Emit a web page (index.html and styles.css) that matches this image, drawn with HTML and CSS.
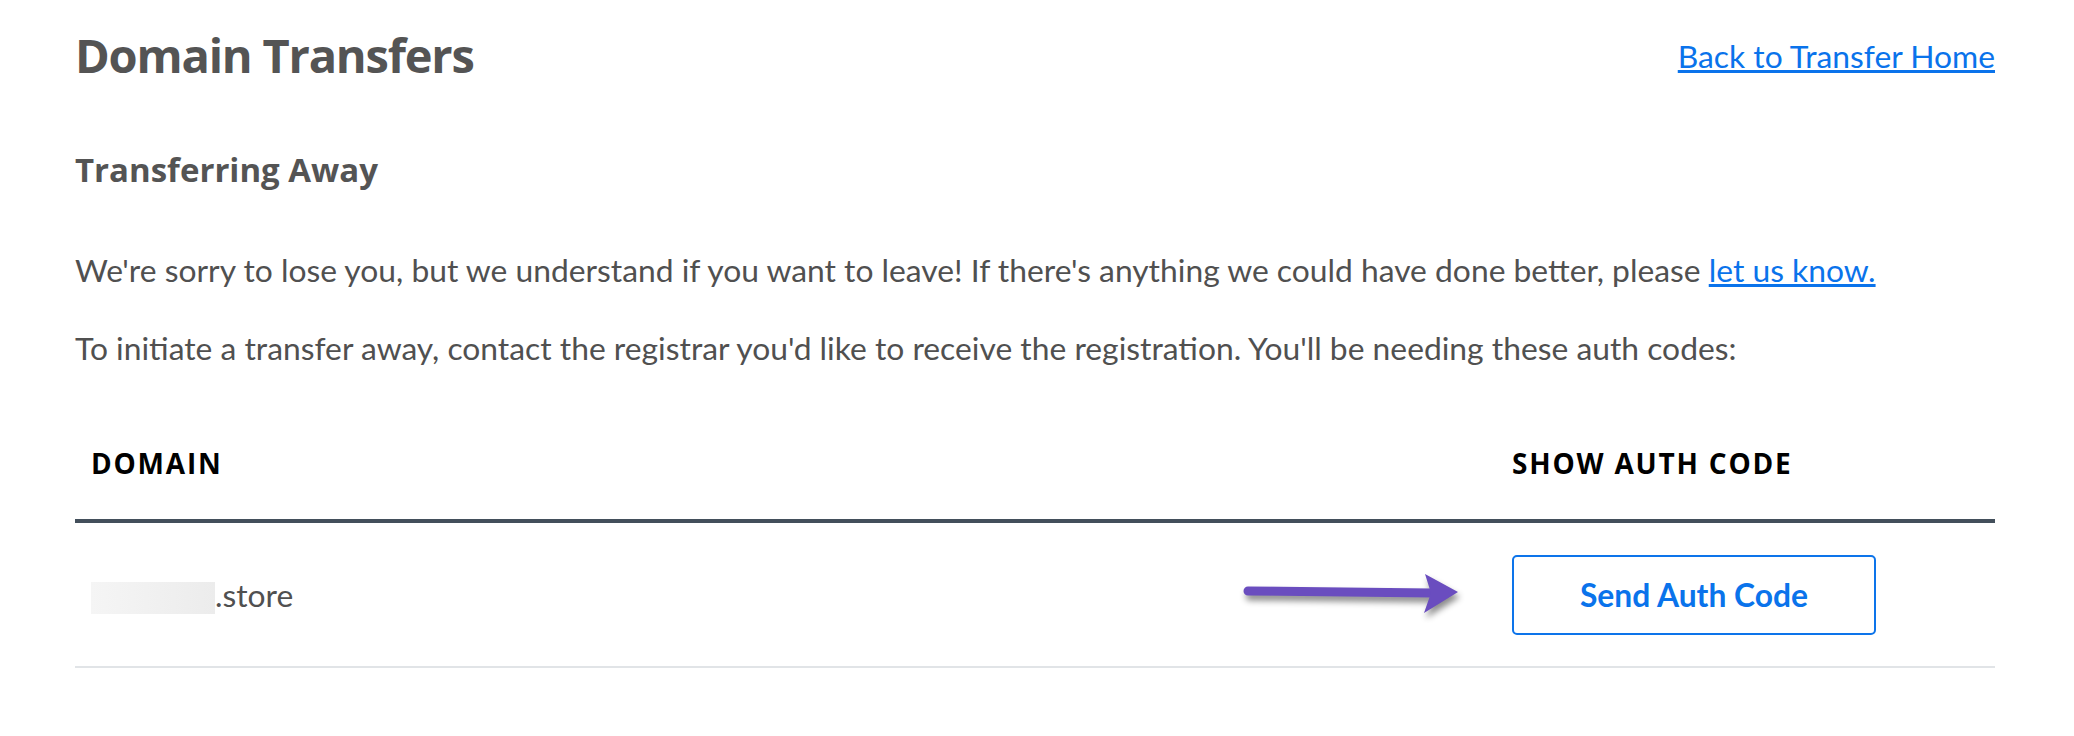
FILE: index.html
```html
<html>
<head>
    <title>Domain Transfers</title>
    <link rel="stylesheet" href="styles.css">
</head>
<body>
  <div class="page">
    <div class="page-head">
      <h1>Domain Transfers</h1>
      <a href="#" class="back-link">Back to Transfer Home</a>
    </div>

    <h2>Transferring Away</h2>

    <p class="intro">We're sorry to lose you, but we understand if you want to leave! If there's anything we could have done better, please <a href="#">let us know.</a></p>
    <p class="intro">To initiate a transfer away, contact the registrar you'd like to receive the registration. You'll be needing these auth codes:</p>

    <table class="auth-table">
      <thead>
        <tr>
          <th>DOMAIN</th>
          <th class="col-action">SHOW AUTH CODE</th>
        </tr>
      </thead>
      <tbody>
        <tr>
          <td class="col-domain"><span class="domain"><span class="redacted"></span>.store</span></td>
          <td class="col-action">
            <svg class="pointer" width="230" height="56" viewBox="0 0 230 56">
              <line x1="12" y1="24" x2="196" y2="26" stroke="#6a4dbf" stroke-width="9" stroke-linecap="round"/>
              <polygon points="189,7 222,25 188,46 195,26" fill="#6a4dbf"/>
            </svg>
            <button class="send-btn">Send Auth Code</button>
          </td>
        </tr>
      </tbody>
    </table>
  </div>
</body>
</html>
```

FILE: styles.css
```css
    body {
        margin: 0;
        background: #fff;
        font-family: "Lato", sans-serif;
        color: #505050;
    }

    .page {
        width: 1920px;
        margin-left: 75px;
        padding-top: 25px;
    }

    .page-head {
        display: flex;
        justify-content: space-between;
        align-items: flex-start;
    }

    h1 {
        margin: 0;
        font-family: "Open Sans", sans-serif;
        font-weight: 700;
        font-size: 47px;
        letter-spacing: -1.2px;
        line-height: 60px;
        color: #545454;
    }

    .back-link {
        margin-top: 12px;
        font-size: 31.8px;
        line-height: 38px;
        color: #0a73eb;
    }

    h2 {
        margin: 65px 0 0 0;
        font-family: "Open Sans", sans-serif;
        font-weight: 700;
        font-size: 33px;
        line-height: 40px;
        color: #545454;
    }

    p.intro {
        margin: 60px 0 0 0;
        font-size: 31.8px;
        line-height: 40px;
    }

    p.intro + p.intro {
        margin-top: 38px;
    }

    p.intro a {
        color: #0a73eb;
    }

    table.auth-table {
        width: 100%;
        margin-top: 76px;
        border-collapse: collapse;
    }

    table.auth-table th {
        text-align: left;
        padding: 0 16px 37px 16px;
        font-family: "Open Sans", sans-serif;
        font-weight: 700;
        font-size: 28px;
        letter-spacing: 1.8px;
        line-height: 38px;
        color: #000;
        border-bottom: 4px solid #434f5b;
    }

    table.auth-table td {
        height: 146px;
        padding: 0 16px;
        border-bottom: 2px solid #e1e4e7;
        font-size: 31.8px;
    }

    td.col-domain {
        padding-bottom: 14px;
    }

    .col-action {
        width: 467px;
        position: relative;
    }

    .redacted {
        display: inline-block;
        width: 124px;
        height: 32px;
        vertical-align: -7px;
        background: linear-gradient(90deg, #f5f5f5, #ececec);
    }

    .send-btn {
        width: 364px;
        height: 80px;
        background: #fff;
        border: 2px solid #0d74ea;
        border-radius: 5px;
        font-family: "Lato", sans-serif;
        font-weight: 700;
        font-size: 31.8px;
        color: #0a73eb;
    }

    /* annotation arrow sitting left of the button */
    .pointer {
        position: absolute;
        left: -260px;
        top: 44px;
        filter: drop-shadow(2px 5px 3px rgba(0, 0, 0, 0.45));
    }
```
